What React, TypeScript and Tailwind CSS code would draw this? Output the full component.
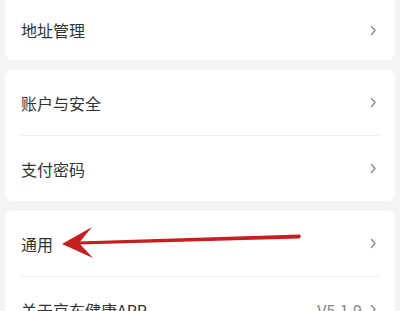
const font = "font-['Noto_Sans_CJK_SC','Noto_Sans',sans-serif]";

type Row = { label: string; extra?: string };

const Chevron = () => (
  <svg width="7" height="11" viewBox="0 0 7 11" className="shrink-0">
    <path d="M1.5 1.5 L5 5.5 L1.5 9.5" fill="none" stroke="#8c8c8c" strokeWidth="1.4" strokeLinecap="round" strokeLinejoin="round" />
  </svg>
);

const Card = ({ rows, rowH = "h-[65px]", className = "" }: { rows: Row[]; rowH?: string; className?: string }) => (
  <div className={`mx-[5px] rounded-[8px] bg-white ${className}`}>
    {rows.map((r, i) => (
      <div key={r.label}>
        {i > 0 && <div className="mx-[16px] h-px bg-[#ededed]" />}
        <div className={`flex items-center pl-[16px] pr-[18px] ${rowH}`}>
          <span className="flex-1 text-[16px] text-[#333]">{r.label}</span>
          {r.extra && <span className="mr-[8px] text-[16px] text-[#888]">{r.extra}</span>}
          <Chevron />
        </div>
      </div>
    ))}
  </div>
);

export default function App() {
  return (
    <div className={`relative h-[311px] w-[400px] overflow-hidden bg-[#f4f4f4] ${font}`}>
      <div className="flex flex-col gap-[10px]">
        <Card rows={[{ label: "地址管理" }]} rowH="h-[60px]" className="!rounded-t-none" />
        <Card rows={[{ label: "账户与安全" }, { label: "支付密码" }]} />
        <Card rows={[{ label: "通用" }, { label: "关于京东健康APP", extra: "V5.1.9" }]} />
      </div>
      <svg className="pointer-events-none absolute left-0 top-0" width="400" height="311" viewBox="0 0 400 311">
        <path d="M300 234.5 L301 236.5 L299.5 238.5 L80 244.5 L78 241.5 Z" fill="#c3201f" />
        <path d="M62 244 L92 227 L79 243 L93 258 Z" fill="#c3201f" />
      </svg>
    </div>
  );
}
